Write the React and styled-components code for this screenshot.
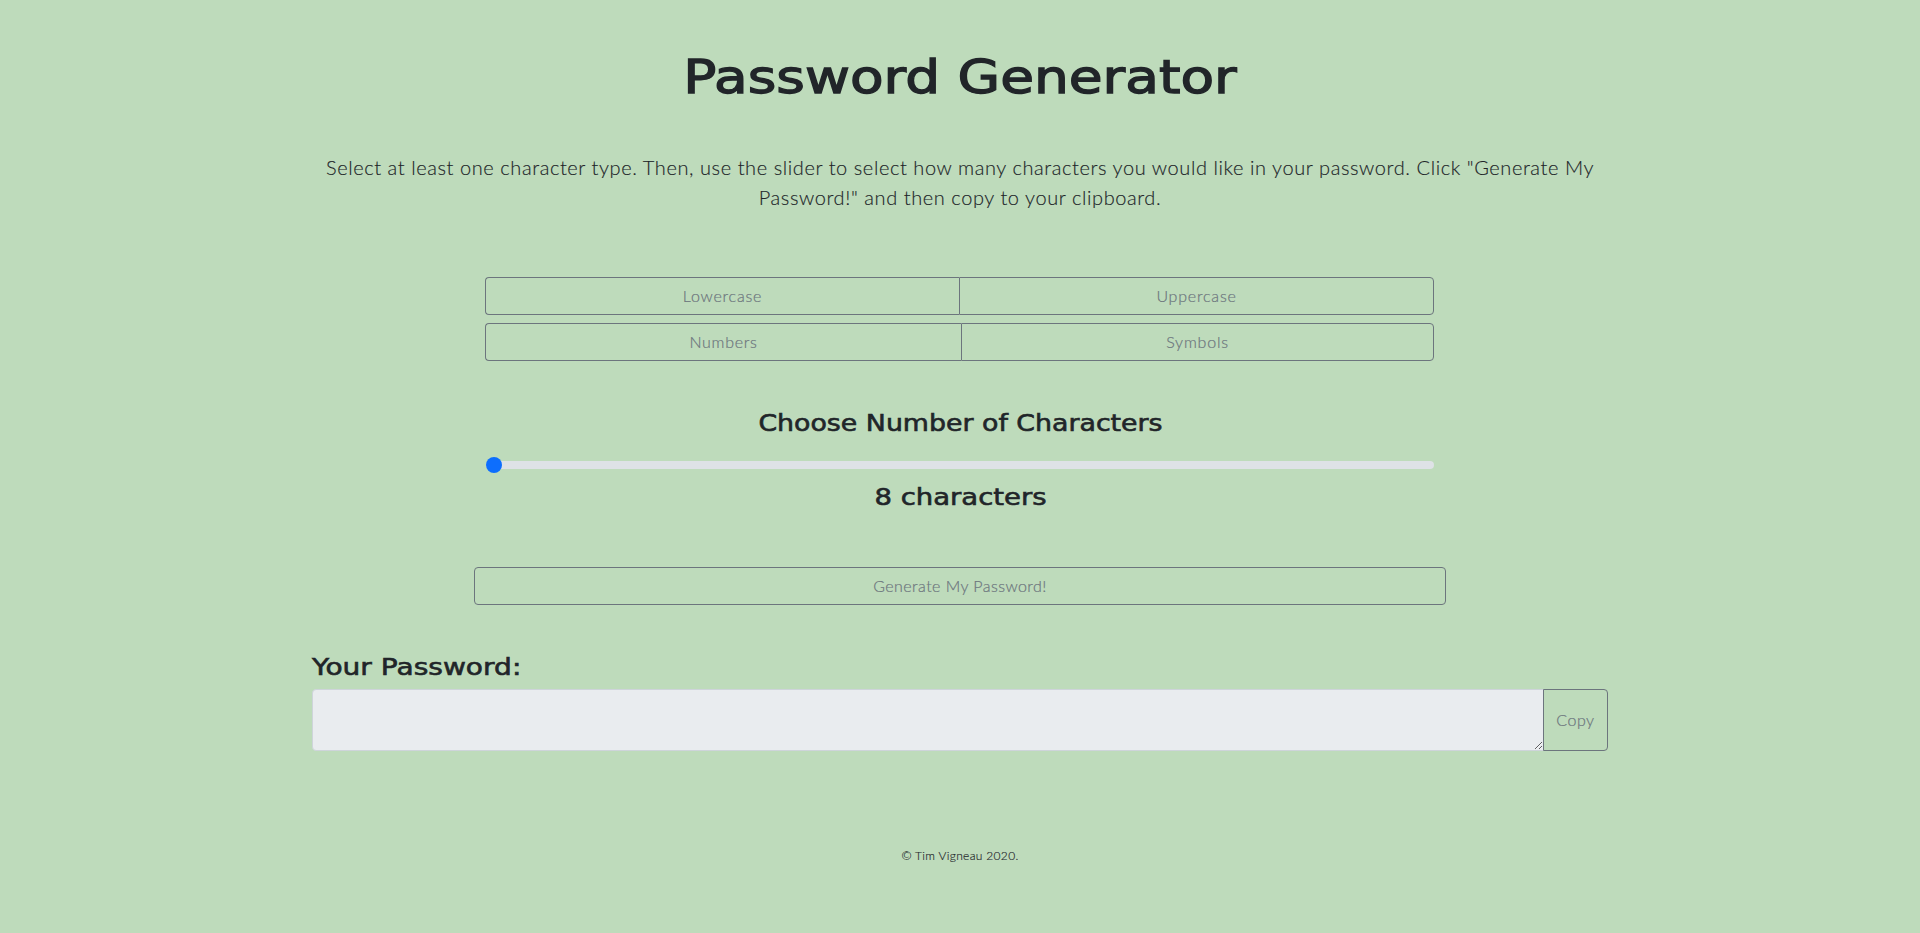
import React, { useState } from 'react';
import styled, { createGlobalStyle } from 'styled-components';

const GlobalStyle = createGlobalStyle`
  *, *::before, *::after { box-sizing: border-box; }
  body {
    margin: 0;
    min-height: 100vh;
    background: #bedbbb;
    color: #212529;
    font: 300 16px/1.5 Lato, sans-serif;
    -webkit-text-stroke: 0.15px currentColor;
  }
`;

const Page = styled.main`
  display: flex;
  flex-direction: column;
  width: 1296px;
  margin: 0 auto;
  padding-top: 48px;
`;

const Title = styled.h1`
  margin: 0;
  height: 58px;
  text-align: center;
  white-space: nowrap;
  font: 400 46px/58px "DejaVu Sans", sans-serif;
  -webkit-text-stroke: 1.3px currentColor;
  transform: scaleX(1.195);
`;

const Intro = styled.p`
  margin: 46px 0 0;
  padding: 0 12px;
  text-align: center;
  font-size: 20px;
  line-height: 30px;
  letter-spacing: 0.58px;
`;

const Options = styled.section`
  display: flex;
  flex-direction: column;
  gap: 8px;
  width: 949px;
  margin: 65px 0 0 173px;
`;

const ButtonGroup = styled.div`
  display: grid;
  grid-template-columns: ${({ $first }) => $first}px 1fr;
`;

const Button = styled.button`
  height: 38px;
  padding: 0 12px;
  border: 1px solid #6c757d;
  border-radius: 4px;
  background: transparent;
  color: #6c757d;
  font: inherit;
  line-height: 24px;
  letter-spacing: ${({ $spacing = 0.65 }) => $spacing}px;
  -webkit-text-stroke: 0.2px currentColor;
`;

const GroupButton = styled(Button)`
  &:first-child {
    border-right: 0;
    border-radius: 4px 0 0 4px;
  }
  &:last-child { border-radius: 0 4px 4px 0; }
`;

const Heading = styled.h4`
  margin: 0;
  height: 29px;
  white-space: nowrap;
  font: 400 23px/30px "DejaVu Sans", sans-serif;
  -webkit-text-stroke: 0.6px currentColor;
  transform: scaleX(${({ $stretch }) => $stretch});
  transform-origin: ${({ $left }) => ($left ? 'left' : 'center')};
`;

const Length = styled.section`
  width: 949px;
  margin: 47px 0 0 174px;
  text-align: center;
`;

const Slider = styled.input`
  display: block;
  appearance: none;
  width: 948px;
  height: 24px;
  margin: 16px 0 5px;
  background: transparent;

  &::-webkit-slider-runnable-track {
    height: 8px;
    border-radius: 16px;
    background: #dee2e6;
  }
  &::-webkit-slider-thumb {
    appearance: none;
    width: 16px;
    height: 16px;
    margin-top: -4px;
    border-radius: 50%;
    background: #0d6efd;
  }
`;

const GenerateButton = styled(Button)`
  width: 972px;
  margin: 56px auto 47px;
`;

const Output = styled.div`
  display: flex;
  height: 62px;
  margin-top: 8px;
`;

const PasswordField = styled.textarea`
  flex: 1;
  min-width: 0;
  height: 62px;
  padding: 6px 12px;
  border: 1px solid #ced4da;
  border-radius: 4px 0 0 4px;
  background: #e9ecef;
  color: #495057;
  font: inherit;
`;

const CopyButton = styled(Button)`
  width: 65px;
  height: 62px;
  margin-left: -1px;
  border-radius: 0 4px 4px 0;
`;

const Footer = styled.footer`
  margin-top: 96px;
  text-align: center;
  font-size: 12px;
  line-height: 18px;
  letter-spacing: 0.33px;
`;

export default function App() {
  const [length, setLength] = useState(8);

  return (
    <>
      <GlobalStyle />
      <Page>
        <Title>Password Generator</Title>
        <Intro>
          Select at least one character type. Then, use the slider to select how many characters you
          would like in your password. Click "Generate My Password!" and then copy to your clipboard.
        </Intro>
        <Options>
          <ButtonGroup $first={474}>
            <GroupButton $spacing={0.8}>Lowercase</GroupButton>
            <GroupButton $spacing={0.8}>Uppercase</GroupButton>
          </ButtonGroup>
          <ButtonGroup $first={476}>
            <GroupButton $spacing={0.7}>Numbers</GroupButton>
            <GroupButton $spacing={0.8}>Symbols</GroupButton>
          </ButtonGroup>
        </Options>
        <Length>
          <Heading $stretch={1.165}>Choose Number of Characters</Heading>
          <Slider
            type="range"
            min="8"
            max="128"
            value={length}
            onChange={(e) => setLength(Number(e.target.value))}
          />
          <Heading $stretch={1.195}>{`${length} characters`}</Heading>
        </Length>
        <GenerateButton $spacing={0.45}>Generate My Password!</GenerateButton>
        <Heading $left $stretch={1.22}>Your Password:</Heading>
        <Output>
          <PasswordField readOnly rows={2} />
          <CopyButton $spacing={0.5}>Copy</CopyButton>
        </Output>
        <Footer>© Tim Vigneau 2020.</Footer>
      </Page>
    </>
  );
}
